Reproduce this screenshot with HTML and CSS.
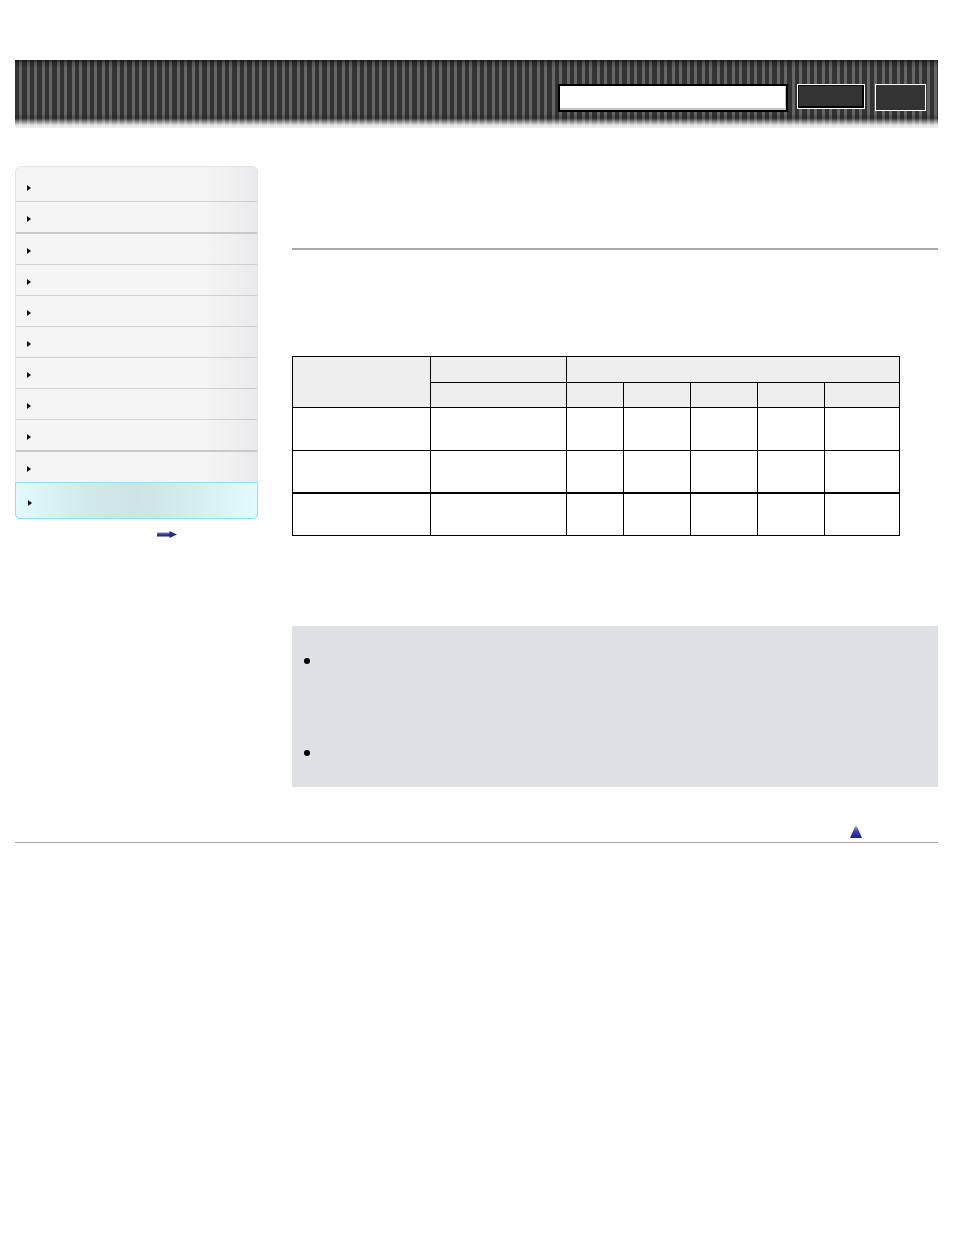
FILE: index.html
```html
<!DOCTYPE html>
<html lang="en">
<head>
<meta charset="utf-8">
<title>Help Guide</title>
<link rel="stylesheet" href="styles.css">
</head>
<body>
<div class="page">
  <header class="masthead">
    <div class="search-field"></div>
    <button class="btn btn-search" type="button"></button>
    <button class="btn btn-help" type="button"></button>
  </header>

  <div class="layout">
    <aside class="sidebar">
      <ul class="nav">
        <li class="nav-item"><span class="caret"></span></li>
        <li class="nav-item thick"><span class="caret"></span></li>
        <li class="nav-item"><span class="caret"></span></li>
        <li class="nav-item"><span class="caret"></span></li>
        <li class="nav-item"><span class="caret"></span></li>
        <li class="nav-item"><span class="caret"></span></li>
        <li class="nav-item"><span class="caret"></span></li>
        <li class="nav-item"><span class="caret"></span></li>
        <li class="nav-item thick"><span class="caret"></span></li>
        <li class="nav-item last"><span class="caret"></span></li>
        <li class="nav-item active"><span class="caret"></span></li>
      </ul>
      <div class="more-link">
        <svg width="21" height="7" viewBox="0 0 21 7" aria-hidden="true">
          <defs>
            <linearGradient id="shaft" x1="0" y1="0" x2="0" y2="1">
              <stop offset="0" stop-color="#7f86cc"/>
              <stop offset="0.45" stop-color="#3540a6"/>
              <stop offset="1" stop-color="#1b2275"/>
            </linearGradient>
          </defs>
          <rect x="0" y="1.5" width="14" height="4" fill="url(#shaft)"/>
          <path d="M12.5 0 L20 3.5 L12.5 7 Z" fill="#222c92"/>
        </svg>
      </div>
    </aside>

    <main class="main">
      <div class="page-title"></div>
      <div class="rule"></div>
      <div class="intro"></div>

      <table class="spec">
        <colgroup>
          <col class="c1"><col class="c2"><col class="c3"><col class="c4"><col class="c5"><col class="c6"><col class="c7">
        </colgroup>
        <thead>
          <tr class="r1">
            <th rowspan="2"></th>
            <th></th>
            <th colspan="5"></th>
          </tr>
          <tr class="r2">
            <th></th><th></th><th></th><th></th><th></th><th></th>
          </tr>
        </thead>
        <tbody>
          <tr class="r3">
            <td></td><td></td><td></td><td></td><td></td><td></td><td></td>
          </tr>
          <tr class="r4 group-end">
            <td></td><td></td><td></td><td></td><td></td><td></td><td></td>
          </tr>
          <tr class="r5">
            <td></td><td></td><td></td><td></td><td></td><td></td><td></td>
          </tr>
        </tbody>
      </table>

      <div class="note">
        <ul class="note-list">
          <li class="note-item first"></li>
          <li class="note-item second"></li>
        </ul>
      </div>
    </main>
  </div>

  <footer class="footer">
    <a class="to-top" href="#">
      <svg width="12" height="12" viewBox="0 0 12 12" aria-hidden="true">
        <defs>
          <linearGradient id="tri" x1="0" y1="0" x2="0" y2="1">
            <stop offset="0" stop-color="#9aa0c8"/>
            <stop offset="0.4" stop-color="#3a45a8"/>
            <stop offset="1" stop-color="#17208a"/>
          </linearGradient>
        </defs>
        <path d="M5 0.5 L7 0.5 L12 12 L0 12 Z" fill="url(#tri)"/>
      </svg>
    </a>
  </footer>
</div>
</body>
</html>
```

FILE: styles.css
```css
html, body {
  margin: 0;
  padding: 0;
  background: #ffffff;
}

body {
  font-family: "Liberation Sans", Arial, sans-serif;
  font-size: 13px;
  color: #000;
}

.page {
  width: 923px;
  margin-left: 15px;
  padding-top: 60px;
}

/* ---------- masthead ---------- */
.masthead {
  height: 68px;
  box-sizing: border-box;
  padding: 24px 12px 0 0;
  display: flex;
  justify-content: flex-end;
  align-items: flex-start;
  background:
    linear-gradient(180deg,
      rgba(0,0,0,0.55) 0px,
      rgba(0,0,0,0.2) 3px,
      rgba(0,0,0,0) 8px,
      rgba(0,0,0,0) 54px,
      rgba(0,0,0,0.25) 58px,
      rgba(255,255,255,0.45) 62px,
      rgba(255,255,255,0.85) 65px,
      rgba(240,240,240,1) 68px),
    repeating-linear-gradient(90deg,
      #333333 0px,
      #333333 4.5px,
      #666666 4.5px,
      #666666 7.5px);
}

.search-field {
  width: 230px;
  height: 28px;
  box-sizing: border-box;
  margin-right: 9px;
  background: #fff;
  border: 2px solid #000;
  box-shadow: inset -1px -2px 0 #c4c4c4;
}

.btn {
  padding: 0;
  margin: 0;
  box-sizing: border-box;
  border: 1px solid #fff;
  background: #333;
  font: inherit;
}

.btn-search {
  width: 68px;
  height: 25px;
  margin-right: 10px;
  box-shadow: inset 1px 1px 0 #111, inset -2px -2px 0 #000;
}

.btn-help {
  width: 51px;
  height: 27px;
}

/* ---------- layout ---------- */
.layout {
  display: flex;
  align-items: flex-start;
  gap: 34px;
  margin-top: 38px;
}

.sidebar {
  width: 243px;
  flex-shrink: 0;
}

.nav {
  list-style: none;
  margin: 0;
  padding: 4px 0 0;
  border: 1px solid #e4e4e4;
  border-bottom: none;
  border-radius: 6px 6px 6px 6px;
  background: linear-gradient(90deg, #f5f5f5 0%, #f5f5f5 78%, #eaeaec 100%);
}

.nav-item {
  height: 30px;
  display: flex;
  align-items: center;
  padding-left: 11px;
  border-bottom: 1px solid #cfcfcf;
}

.nav-item.thick {
  border-bottom: 2px solid #c8c8c8;
}

.nav-item.last {
  border-bottom: none;
}

.nav-item.active {
  height: 35px;
  margin: 0 -1px;
  padding-left: 12px;
  border: 1px solid #86e2f4;
  border-radius: 0 0 5px 5px;
  background: linear-gradient(90deg, #e0fafd 0%, #d2e9ec 30%, #cde3e6 50%, #d6eef1 75%, #e3fbfe 100%);
}

.caret {
  width: 0;
  height: 0;
  margin-top: 4px;
  border-left: 4px solid #111;
  border-top: 3px solid transparent;
  border-bottom: 3px solid transparent;
}

.more-link {
  padding: 12px 0 0 142px;
}

.more-link svg {
  display: block;
}

/* ---------- main ---------- */
.main {
  flex: 1;
  min-width: 0;
}

.page-title {
  height: 82px;
}

.rule {
  height: 2px;
  background: #a8a8a8;
}

.intro {
  height: 106px;
}

.spec {
  width: 608px;
  table-layout: fixed;
  border-collapse: separate;
  border-spacing: 0;
  border-top: 1px solid #000;
  border-left: 1px solid #000;
}

.spec .c1 { width: 138px; }
.spec .c2 { width: 136px; }
.spec .c3 { width: 57px; }
.spec .c4 { width: 67px; }
.spec .c5 { width: 67px; }
.spec .c6 { width: 67px; }
.spec .c7 { width: 75px; }

.spec th,
.spec td {
  padding: 0;
  border-right: 1px solid #000;
  border-bottom: 1px solid #000;
}

.spec th {
  background: #eeeeee;
}

.spec .r1 { height: 26px; }
.spec .r2 { height: 25px; }
.spec .r3 { height: 43px; }
.spec .r4 { height: 43px; }
.spec .r5 { height: 42px; }

.spec .group-end td {
  border-bottom-width: 2px;
}

.note {
  margin-top: 90px;
  background: #dfe1e5;
  padding: 32px 0 15px;
}

.note-list {
  list-style: none;
  margin: 0;
  padding: 0;
}

.note-item {
  display: flex;
  align-items: flex-start;
}

.note-item::before {
  content: "";
  width: 6px;
  height: 6px;
  margin-left: 12px;
  border-radius: 50%;
  background: #000;
}

.note-item.first { height: 92px; }
.note-item.second { height: 22px; }

/* ---------- footer ---------- */
.footer {
  margin-top: 39px;
  display: flex;
  justify-content: flex-end;
  padding: 0 76px 4px 0;
  border-bottom: 1px solid #aaaaaa;
}

.to-top svg {
  display: block;
}
```
